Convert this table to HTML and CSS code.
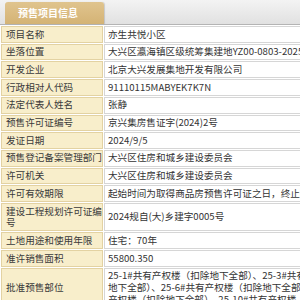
FILE: index.html
```html
<!DOCTYPE html>
<html lang="zh-CN">
<head>
<meta charset="utf-8">
<title>预售项目信息</title>
<link rel="stylesheet" href="styles.css">
</head>
<body>
<div class="tabbar"><div class="tab">预售项目信息</div></div>
<table class="info">
  <tr><td class="label">项目名称</td><td class="value">亦生共悦小区</td></tr>
  <tr><td class="label">坐落位置</td><td class="value">大兴区瀛海镇区级统筹集建地YZ00-0803-2025地块</td></tr>
  <tr><td class="label">开发企业</td><td class="value">北京大兴发展集地开发有限公司</td></tr>
  <tr><td class="label">行政相对人代码</td><td class="value">91110115MABYEK7K7N</td></tr>
  <tr><td class="label">法定代表人姓名</td><td class="value">张静</td></tr>
  <tr><td class="label">预售许可证编号</td><td class="value">京兴集房售证字(2024)2号</td></tr>
  <tr><td class="label">发证日期</td><td class="value">2024/9/5</td></tr>
  <tr><td class="label">预售登记备案管理部门</td><td class="value">大兴区住房和城乡建设委员会</td></tr>
  <tr><td class="label">许可机关</td><td class="value">大兴区住房和城乡建设委员会</td></tr>
  <tr><td class="label">许可有效期限</td><td class="value">起始时间为取得商品房预售许可证之日，终止时间为竣工之日</td></tr>
  <tr><td class="label">建设工程规划许可证编<br>号</td><td class="value">2024规自(大)乡建字0005号</td></tr>
  <tr><td class="label">土地用途和使用年限</td><td class="value">住宅：70年</td></tr>
  <tr><td class="label">准许销售面积</td><td class="value">55800.350</td></tr>
  <tr><td class="label">批准预售部位</td><td class="value">25-1#共有产权楼（扣除地下全部）、25-3#共有产权楼（扣除<br>地下全部）、25-6#共有产权楼（扣除地下全部）、25-8#共有<br>产权楼（扣除地下全部）、25-10#共有产权楼（扣除地下全部）</td></tr>
</table>
</body>
</html>
```
FILE: styles.css
```css
html, body {
  margin: 0;
  padding: 0;
  background: #ffffff;
  overflow: hidden;
}
body {
  font-family: "Noto Sans CJK SC", sans-serif;
  font-size: 9.6px;
  color: #333333;
}
.tabbar {
  height: 24px;
  width: 420px;
  background: linear-gradient(#f3f3f3, #e1e1e1);
  border-bottom: 1px solid #b4b4b4;
  display: flex;
  align-items: flex-end;
}
.tab {
  margin-left: 5px;
  width: 86px;
  height: 22px;
  padding-left: 13px;
  background: linear-gradient(#e0c48e, #d4b375);
  border-radius: 3px 3px 0 0;
  box-shadow: 1px 0 1px rgba(0, 0, 0, 0.15);
  color: #ffffff;
  font-weight: bold;
  font-size: 10px;
  line-height: 22px;
}
.info {
  border-collapse: separate;
  border-spacing: 1px;
  width: 420px;
}
.info td {
  border: 1px solid #d6d6d6;
  padding: 1.5px 0 1.5px 3px;
  line-height: 11.7px;
  white-space: nowrap;
  vertical-align: middle;
}
.info td.label {
  width: 96px;
  padding-left: 4px;
  background: #f8eecb;
  border-color: #e3d2a2;
  color: #3a3a3a;
}
.info td.value {
  background: #ffffff;
}
```
